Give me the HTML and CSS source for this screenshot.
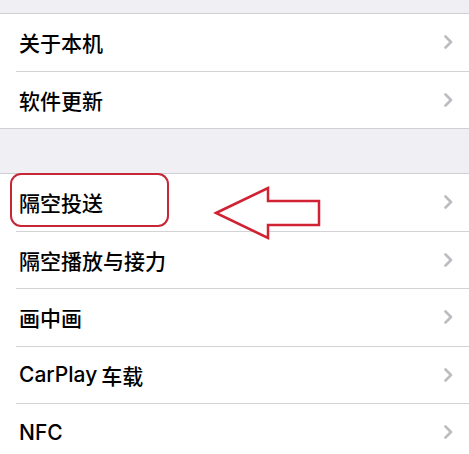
FILE: index.html
```html
<!DOCTYPE html>
<html lang="zh-CN">
  <head>
    <meta charset="UTF-8" />
    <meta name="viewport" content="width=device-width, initial-scale=1.0" />
    <title>通用</title>
    <link rel="stylesheet" href="styles.css">
  </head>
  <body>
    <div class="spacer top"></div>
    <ul class="group">
      <li class="row"><span class="label">关于本机</span><svg class="chevron" viewBox="0 0 9 14"><path d="M1.5 1.5 L7 7 L1.5 12.5" /></svg></li>
      <li class="row"><span class="label">软件更新</span><svg class="chevron" viewBox="0 0 9 14"><path d="M1.5 1.5 L7 7 L1.5 12.5" /></svg></li>
    </ul>
    <div class="spacer"></div>
    <ul class="group">
      <li class="row marked">
        <span class="label">隔空投送</span>
        <span class="highlight"></span>
        <svg class="arrow" viewBox="0 0 110 56">
          <path d="M3 27 L55 2 L55 15 L106 15 L106 39 L55 39 L55 52 Z" />
        </svg>
        <svg class="chevron" viewBox="0 0 9 14"><path d="M1.5 1.5 L7 7 L1.5 12.5" /></svg>
      </li>
      <li class="row"><span class="label">隔空播放与接力</span><svg class="chevron" viewBox="0 0 9 14"><path d="M1.5 1.5 L7 7 L1.5 12.5" /></svg></li>
      <li class="row"><span class="label">画中画</span><svg class="chevron" viewBox="0 0 9 14"><path d="M1.5 1.5 L7 7 L1.5 12.5" /></svg></li>
      <li class="row"><span class="label">CarPlay<span class="gap"></span>车载</span><svg class="chevron" viewBox="0 0 9 14"><path d="M1.5 1.5 L7 7 L1.5 12.5" /></svg></li>
      <li class="row"><span class="label">NFC</span><svg class="chevron" viewBox="0 0 9 14"><path d="M1.5 1.5 L7 7 L1.5 12.5" /></svg></li>
    </ul>
  </body>
</html>
```

FILE: styles.css
```css
body {
  margin: 0;
  background-color: #efeff4;
  font-family: Inter, "Noto Sans CJK SC", sans-serif;
  color: #000;
  overflow: hidden;
}
.spacer {
  height: 44px;
}
.spacer.top {
  height: 13px;
}
.group {
  list-style: none;
  margin: 0;
  padding: 0;
  background-color: #fff;
  border-top: 1px solid #d0d0d4;
  border-bottom: 1px solid #d0d0d4;
}
.row {
  position: relative;
  display: flex;
  align-items: center;
  justify-content: space-between;
  height: 56.5px;
  padding: 0 16px 0 19px;
  font-size: 21px;
  font-weight: 500;
}
.row + .row::before {
  content: "";
  position: absolute;
  top: -1px;
  left: 16px;
  right: 0;
  border-top: 1px solid #d3d3d7;
}
.row + .row {
  margin-top: 1px;
}
.label {
  display: flex;
  align-items: center;
}
.gap {
  display: inline-block;
  width: 4px;
}
.chevron {
  width: 9px;
  height: 14px;
  fill: none;
  stroke: #bcbcc1;
  stroke-width: 2.6;
  stroke-linecap: round;
  stroke-linejoin: round;
}
.highlight {
  position: absolute;
  left: 10px;
  top: -1px;
  width: 155px;
  height: 50px;
  border: 2px solid #c72637;
  border-radius: 11px;
}
.arrow {
  position: absolute;
  left: 213px;
  top: 12px;
  width: 110px;
  height: 56px;
  fill: #fff;
  stroke: #d02232;
  stroke-width: 2.5;
  z-index: 1;
}
```
